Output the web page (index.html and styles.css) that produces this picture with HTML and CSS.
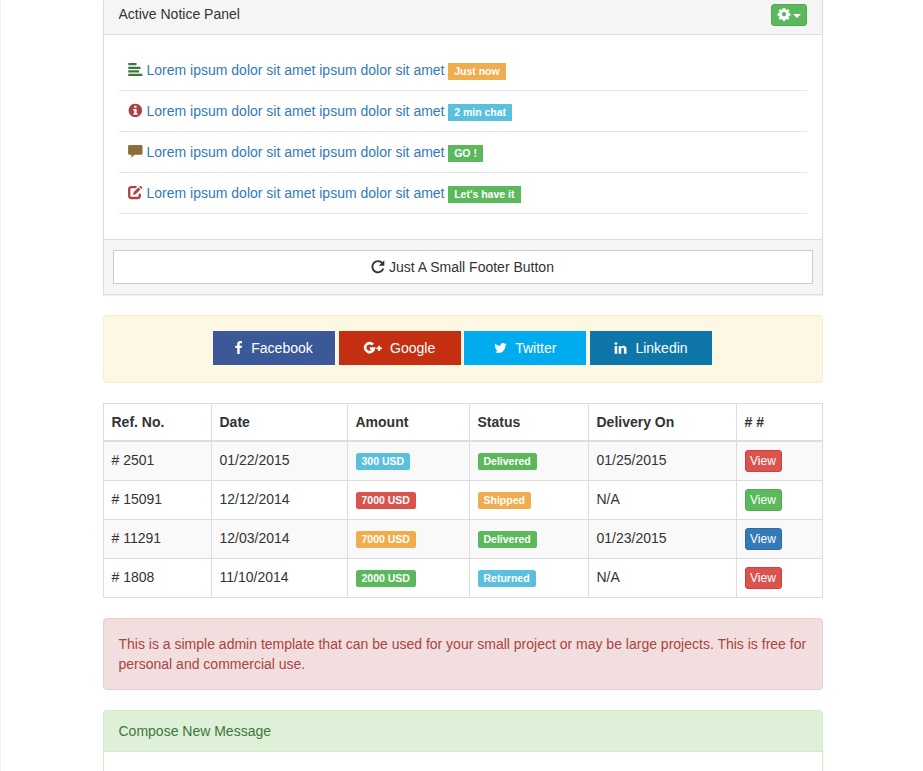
FILE: index.html
```html
<!DOCTYPE html>
<html lang="en">
<head>
<meta charset="utf-8">
<title>Admin</title>
<link rel="stylesheet" href="styles.css">
</head>
<body>
<main class="page">
  <section class="panel">
    <header class="panel-heading">
      <span>Active Notice Panel</span>
      <button class="btn-xs green" aria-label="Settings">
        <svg class="cog" viewBox="0 0 12 12"><path fill-rule="evenodd" d="M4.900 0h2.200l.4 1.600 1 .4 1.400-.9 1.500 1.500-.9 1.400.4 1 1.600.3v2.200l-1.600.4-.4 1 .9 1.400-1.500 1.500-1.400-.9-1 .4-.4 1.600H4.900l-.4-1.600-1-.4-1.400.9-1.500-1.500.9-1.400-.4-1L-.5 7.500V5.300l1.600-.3.4-1-.9-1.400 1.500-1.500 1.400.9 1-.4zM6 4a2.200 2.200 0 1 0 .01 0z"/></svg>
        <span class="caret"></span>
      </button>
    </header>
    <ul class="notices">
      <li>
        <svg class="icon success" viewBox="0 0 14 14"><path d="M.3 0h8.200v2.300H.3zM.3 3.700h12.200V6H.3zM.3 7.300h10.700v2.300H.3zM.3 10.800h14V13H.3z"/></svg>
        <a href="#">Lorem ipsum dolor sit amet ipsum dolor sit amet</a>
        <span class="label orange">Just now</span>
      </li>
      <li>
        <svg class="icon danger" viewBox="0 0 14 14"><path fill-rule="evenodd" d="M7.300-.3a6.700 6.700 0 1 0 .01 0zM6.300 1.800h2.200v2H6.300zM5.300 5h3.300v4.200h1v1.600H5.300V9.200h1V6.500h-1z"/></svg>
        <a href="#">Lorem ipsum dolor sit amet ipsum dolor sit amet</a>
        <span class="label blue">2 min chat</span>
      </li>
      <li>
        <svg class="icon warning" viewBox="0 0 14 14"><path d="M1.300 0h12Q14.500 0 14.500 1.200V8.500Q14.500 9.700 13.300 9.700H6.500L3.400 12.800V9.700H1.300Q.1 9.700 .1 8.500V1.200Q.1 0 1.300 0z"/></svg>
        <a href="#">Lorem ipsum dolor sit amet ipsum dolor sit amet</a>
        <span class="label green">GO !</span>
      </li>
      <li>
        <svg class="icon danger" viewBox="0 0 14 14"><path d="M8.500 1.200H3.500Q1.200 1.200 1.200 3.500v6.200Q1.200 12 3.500 12h6q2.300 0 2.300-2.300V7.800" fill="none" stroke="currentColor" stroke-width="2.300"/><path d="M10.400 1.400l2.100 2.100-4.600 4.600-3 1 .9-3.100zM11.100.7l.8-.7h1L14.300 1.400v.7l-1 .9z"/></svg>
        <a href="#">Lorem ipsum dolor sit amet ipsum dolor sit amet</a>
        <span class="label green">Let's have it</span>
      </li>
    </ul>
    <footer class="panel-footer">
      <button class="btn-block">
        <svg class="icon" viewBox="0 0 14 14"><path d="M11.300 3.200A5.600 5.600 0 1 0 12.300 8.500" fill="none" stroke="currentColor" stroke-width="1.900"/><path d="M13.300.3V5.800H7.800z"/></svg>
        <span>Just A Small Footer Button</span>
      </button>
    </footer>
  </section>

  <section class="social">
    <a class="facebook" href="#"><svg width="8" height="14" viewBox="384 128 1024 1792"><path transform="translate(-60 128)" d="M1343 12v264h-157q-86 0-116 36t-30 108v189h293l-39 296h-254v759h-306v-759h-255v-296h255v-218q0-186 104-288.500t277-102.500q147 0 228 12z"/></svg>Facebook</a>
    <a class="google" href="#"><svg width="18" height="14" viewBox="0 0 18 14"><path d="M9 3.700A4.500 4.500 0 1 0 10 7.500H5.900" fill="none" stroke="currentColor" stroke-width="2.600"/><path d="M14.300 4.800h1.800v1.700h1.800v1.800h-1.800V10h-1.800V8.300h-1.800V6.500h1.800z"/></svg>Google</a>
    <a class="twitter" href="#"><svg width="13" height="14" viewBox="64 0 1664 1792"><path d="M1684 408q-67 98-162 167 1 14 1 42 0 130-38 259.500t-115.500 248.500-184.500 210.500-258 146-323 54.500q-271 0-496-145 35 4 78 4 225 0 401-138-105-2-188-64.500t-114-159.500q33 5 61 5 43 0 85-11-112-23-185.500-111.500t-73.500-205.500v-4q68 38 146 41-66-44-105-115t-39-154q0-88 44-163 121 149 294.500 238.500t371.500 99.500q-8-38-8-74 0-134 94.500-228.500t228.500-94.500q140 0 236 102 109-21 205-78-37 115-142 178 93-10 186-50z"/></svg>Twitter</a>
    <a class="linkedin" href="#"><svg width="13" height="14" viewBox="64 0 1664 1792"><path d="M477 625v991h-330v-991h330zm21-306q1 73-50.500 122t-135.500 49h-2q-82 0-132-49t-50-122q0-74 51.500-122.500t134.500-48.500 133 48.500 51 122.500zm1166 729v568h-329v-530q0-105-40.500-164.500t-126.500-59.500q-63 0-105.500 34.500t-63.500 85.500q-11 30-11 81v553h-329q2-399 2-647t-1-296l-1-48h329v144h-2q20-32 41-56t56.500-52 87-43.500 114.500-15.500q171 0 275 113.500t104 332.500z"/></svg>Linkedin</a>
  </section>

  <table class="orders">
    <colgroup><col class="c-ref"><col class="c-date"><col class="c-amount"><col class="c-status"><col class="c-delivery"><col></colgroup>
    <thead>
      <tr><th>Ref. No.</th><th>Date</th><th>Amount</th><th>Status</th><th>Delivery On</th><th># #</th></tr>
    </thead>
    <tbody>
      <tr><td># 2501</td><td>01/22/2015</td><td><span class="label blue">300 USD</span></td><td><span class="label green">Delivered</span></td><td>01/25/2015</td><td><a class="btn-xs red" href="#">View</a></td></tr>
      <tr><td># 15091</td><td>12/12/2014</td><td><span class="label red">7000 USD</span></td><td><span class="label orange">Shipped</span></td><td>N/A</td><td><a class="btn-xs green" href="#">View</a></td></tr>
      <tr><td># 11291</td><td>12/03/2014</td><td><span class="label orange">7000 USD</span></td><td><span class="label green">Delivered</span></td><td>01/23/2015</td><td><a class="btn-xs primary" href="#">View</a></td></tr>
      <tr><td># 1808</td><td>11/10/2014</td><td><span class="label green">2000 USD</span></td><td><span class="label blue">Returned</span></td><td>N/A</td><td><a class="btn-xs red" href="#">View</a></td></tr>
    </tbody>
  </table>

  <div class="alert">This is a simple admin template that can be used for your small project or may be large projects. This is free for personal and commercial use.</div>

  <section class="compose">
    <header>Compose New Message</header>
  </section>
</main>
</body>
</html>
```
FILE: styles.css
```css
* { box-sizing: border-box; }
html { height: 100%; overflow: hidden; }
body {
  margin: 0;
  height: 100%;
  overflow: hidden;
  border-left: 1px solid #f3f3f3;
  background: #fff;
  color: #333;
  font: 14px/20px "Liberation Sans", Arial, sans-serif;
}
a { color: #337ab7; text-decoration: none; }
svg { fill: currentColor; flex: none; overflow: visible; }
button { font: inherit; color: inherit; margin: 0; }

.page {
  width: 720px;
  margin-left: 102px;
  display: flex;
  flex-direction: column;
  gap: 20px;
}

.panel {
  border: 1px solid #ddd;
  border-top: 0;
  box-shadow: 0 1px 1px rgba(0, 0, 0, .05);
}
.panel-heading {
  display: flex;
  justify-content: space-between;
  align-items: flex-start;
  height: 35px;
  padding: 4px 15px 10px 14.500px;
  background: #f5f5f5;
  border-bottom: 1px solid #ddd;
}
.notices {
  list-style: none;
  margin: 0;
  padding: 15px 15px 25px;
}
.notices li {
  display: flex;
  align-items: flex-start;
  height: 41px;
  padding: 10px 9px;
  border-bottom: 1px solid #e5e5e5;
}
.icon { width: 14px; height: 14px; margin-top: 3px; margin-right: 4.500px; }
.success { color: #3c763d; }
.danger { color: #a94442; }
.warning { color: #8a6d3b; }
.notices .label { margin: 3px 0 0 3.500px; border-radius: 0; padding: 0 6.200px; }

.label {
  display: block;
  width: fit-content;
  height: 17px;
  padding: 0 6px;
  border-radius: 2.600px;
  color: #fff;
  font-size: 10.500px;
  font-weight: bold;
  line-height: 17px;
  white-space: nowrap;
}
.orange { background: #f0ad4e; }
.blue { background: #5bc0de; }
.green { background: #5cb85c; border-color: #4cae4c; }
.red { background: #d9534f; border-color: #d43f3a; }
.primary { background: #337ab7; border-color: #2e6da4; }

.btn-xs {
  display: flex;
  align-items: center;
  width: 37px;
  height: 22px;
  padding: 1px 4.500px;
  border-width: 1px;
  border-style: solid;
  border-radius: 3px;
  color: #fff;
  font-size: 12px;
  line-height: 18px;
}
.panel-heading .btn-xs { width: 36px; padding: 1px 5.500px; }
.cog { width: 12px; height: 12px; margin-top: -2px; }
.caret {
  margin: 2px 0 0 3px;
  border: 4px solid transparent;
  border-top-color: #fff;
  border-bottom: 0;
}

.panel-footer {
  padding: 10px 9px;
  background: #f5f5f5;
  border-top: 1px solid #ddd;
}
.btn-block {
  display: flex;
  justify-content: center;
  width: 100%;
  height: 34px;
  padding: 6px 13px 6px 12px;
  border: 1px solid #ccc;
  background: #fff;
}
.btn-block .icon { margin-right: 3.900px; }

.social {
  display: flex;
  justify-content: center;
  gap: 3.660px;
  height: 68px;
  padding: 15px 16px 15px 15px;
  border: 1px solid #faebcc;
  border-radius: 4px;
  background: #fcf8e3;
}
.social a {
  display: flex;
  align-items: center;
  justify-content: center;
  gap: 8px;
  width: 122px;
  height: 34px;
  color: #fff;
}
.facebook { background: #3b5998; }
.google { background: #c32f10; }
.twitter { background: #00aced; }
.linkedin { background: #0e76a8; }

.orders {
  width: 720px;
  table-layout: fixed;
  border-collapse: separate;
  border-spacing: 0;
  border-top: 1px solid #ddd;
  border-left: 1px solid #ddd;
}
.c-ref { width: 108px; }
.c-date { width: 136px; }
.c-amount { width: 122px; }
.c-status { width: 119px; }
.c-delivery { width: 148px; }
.orders th, .orders td {
  padding: 8px 7.500px;
  text-align: left;
  vertical-align: top;
  border-right: 1px solid #ddd;
  border-bottom: 1px solid #ddd;
}
.orders th { height: 38px; border-bottom-width: 2px; }
.orders td { height: 39px; }
.orders td .label { margin-top: 3px; }
.orders tbody tr:nth-child(odd) { background: #f9f9f9; }

.alert {
  height: 72px;
  padding: 15px 15px 15px 14.500px;
  border: 1px solid #ebccd1;
  border-radius: 4px;
  background: #f2dede;
  color: #a94442;
}
.compose {
  height: 61px;
  border: 1px solid #d6e9c6;
  border-bottom: 0;
  border-radius: 4px 4px 0 0;
}
.compose header {
  height: 41px;
  padding: 10px 14.500px;
  background: #dff0d8;
  border-bottom: 1px solid #d6e9c6;
  border-radius: 3px 3px 0 0;
  color: #3c763d;
}
```
